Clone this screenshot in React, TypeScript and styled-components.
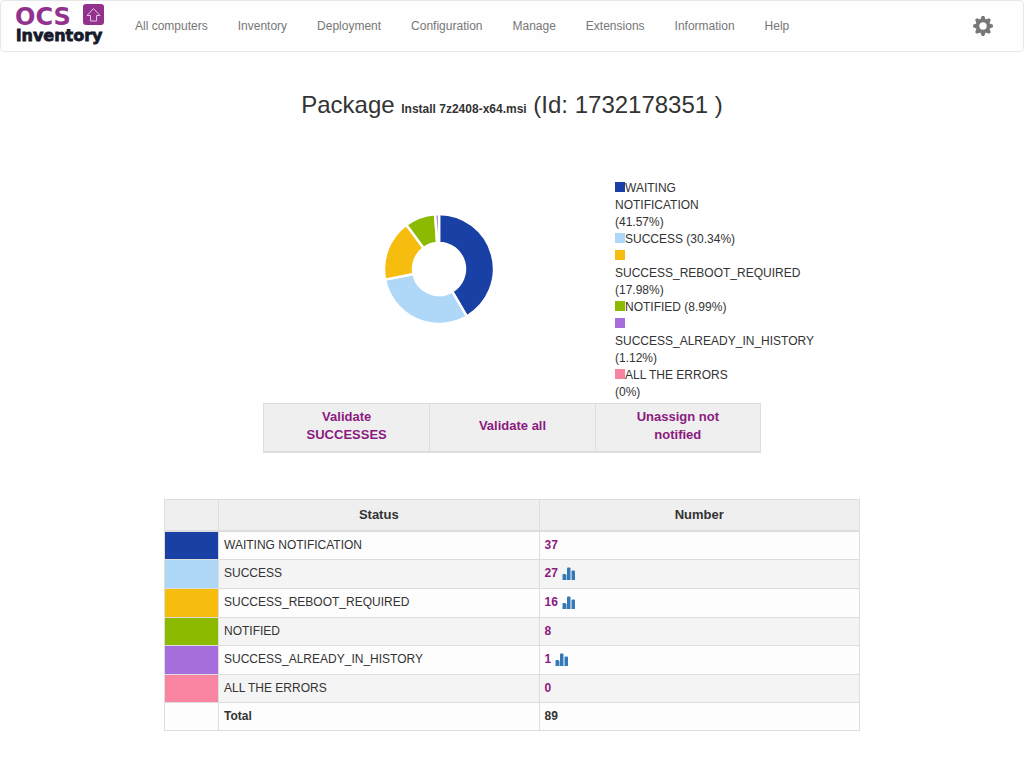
import React from 'react';
import styled, { createGlobalStyle } from 'styled-components';

const GlobalStyle = createGlobalStyle`
  * { box-sizing: border-box; }
  body {
    margin: 0;
    background: #fff;
    color: #333;
    font-family: "Liberation Sans", Arial, Helvetica, sans-serif;
    font-size: 12px;
    line-height: 17px;
  }
`;

const PURPLE = '#8b1a80';

const Navbar = styled.nav`
  display: flex;
  align-items: center;
  height: 52px;
  padding: 0 30px 0 15px;
  border: 1px solid #e7e7e7;
  border-radius: 4px;
  background: #fefefe;
`;

const Brand = styled.a`
  display: block;
  width: 90px;
  height: 44px;
  margin-right: 14px;
`;

const Menu = styled.ul`
  display: flex;
  flex: 1;
  margin: 0;
  padding: 0;
  list-style: none;
`;

const MenuLink = styled.a`
  display: block;
  padding: 15px;
  color: #777;
  text-decoration: none;
  white-space: nowrap;
`;

const GearButton = styled.button`
  display: flex;
  padding: 0;
  border: 0;
  background: none;
  cursor: pointer;
`;

const Main = styled.main`
  padding: 39px 164px 36px;
`;

const Title = styled.h3`
  margin: 0 0 57px;
  font-size: 24px;
  font-weight: 400;
  line-height: 28px;
  text-align: center;
`;

const PackageName = styled.b`
  font-size: 12px;
`;

const Summary = styled.section`
  width: 100%;
  max-width: 498px;
  margin: 0 auto 46px;
`;

const ChartRow = styled.div`
  display: flex;
  padding-bottom: 2px;
`;

const ChartArea = styled.div`
  flex: 1;
  display: flex;
  justify-content: center;
  padding-top: 34px;
`;

const Legend = styled.ul`
  width: 146px;
  margin: 0;
  padding: 0 16px 0 0;
  list-style: none;
`;

const Swatch = styled.span<{ $color: string }>`
  display: inline-block;
  width: 10px;
  height: 10px;
  background: ${(p) => p.$color};
`;

const Actions = styled.div`
  display: grid;
  grid-template-columns: repeat(3, 1fr);
  height: 50px;
  border: 1px solid #ddd;
  border-bottom-width: 2px;
  background: #efefef;
`;

const ActionButton = styled.button`
  padding: 0 40px 3px;
  border: 0;
  background: none;
  color: ${PURPLE};
  font: bold 13px/18px "Liberation Sans", Arial, sans-serif;
  cursor: pointer;
  & + & { border-left: 1px solid #ddd; }
`;

const StatusTable = styled.table`
  width: 100%;
  table-layout: fixed;
  border-collapse: collapse;
  tbody tr { background: #fdfdfd; }
  tbody tr:nth-child(even) { background: #f4f4f4; }
`;

const ColorCol = styled.col`
  width: 54px;
`;

const HeadCell = styled.th`
  height: 31px;
  padding: 5px;
  border: 1px solid #ddd;
  border-bottom-width: 2px;
  background: #efefef;
  font-size: 13px;
`;

const Cell = styled.td<{ $fill?: string; $strong?: boolean }>`
  padding: 5px;
  border: 1px solid #ddd;
  vertical-align: top;
  font-weight: ${(p) => (p.$strong ? 700 : 400)};
  background: ${(p) => p.$fill ?? 'transparent'};
  background-clip: padding-box;
`;

const CountLine = styled.div`
  display: flex;
  align-items: center;
  gap: 4px;
`;

const CountLink = styled.a`
  color: ${PURPLE};
  font-weight: 700;
  text-decoration: none;
`;

const StatsLink = styled.a`
  display: flex;
  align-items: center;
  height: 18px;
`;

type Status = { label: string; percent: string; count: number; color: string; stats?: boolean };

const statuses: Status[] = [
  { label: 'WAITING NOTIFICATION', percent: '41.57%', count: 37, color: '#1941a5' },
  { label: 'SUCCESS', percent: '30.34%', count: 27, color: '#afd8f8', stats: true },
  { label: 'SUCCESS_REBOOT_REQUIRED', percent: '17.98%', count: 16, color: '#f6bd0f', stats: true },
  { label: 'NOTIFIED', percent: '8.99%', count: 8, color: '#8bba00' },
  { label: 'SUCCESS_ALREADY_IN_HISTORY', percent: '1.12%', count: 1, color: '#a66edd', stats: true },
  { label: 'ALL THE ERRORS', percent: '0%', count: 0, color: '#f984a1' },
];

const total = statuses.reduce((sum, s) => sum + s.count, 0);

const menuItems = [
  'All computers', 'Inventory', 'Deployment', 'Configuration',
  'Manage', 'Extensions', 'Information', 'Help',
];

function Logo() {
  return (
    <svg width="90" height="44" viewBox="0 0 90 44" role="img" aria-label="OCS inventory">
      <text x="-1" y="21" fontFamily="DejaVu Sans" fontWeight="700" fontSize="24" fill="#93328e">OCS</text>
      <rect x="67" y="0" width="21" height="21" rx="3" fill="#93328e" />
      <path d="M77.500 4.500L84 11.500H80.500V17H74.500V11.500H71Z" fill="none" stroke="#e3c3e1" strokeWidth="1" strokeLinejoin="round" />
      <text x="0" y="37" fontFamily="DejaVu Sans" fontWeight="700" fontSize="16" fill="#171a2b" stroke="#171a2b" strokeWidth="0.8">inventory</text>
    </svg>
  );
}

function Gear() {
  const teeth = [0, 45, 90, 135, 180, 225, 270, 315];
  return (
    <svg width="20" height="20" viewBox="-10 -10 20 20" aria-hidden="true">
      <circle r="5.500" fill="none" stroke="#777" strokeWidth="3.600" />
      {teeth.map((a) => (
        <path key={a} d="M-2.600 -6.500L-1.200 -9.900H1.200L2.600 -6.500Z" fill="#777" transform={`rotate(${a})`} />
      ))}
    </svg>
  );
}

function Donut() {
  const outer = 55;
  const inner = 26;
  const point = (r: number, turn: number) => {
    const a = turn * 2 * Math.PI;
    return `${r * Math.sin(a)} ${-r * Math.cos(a)}`;
  };
  let start = 0;
  return (
    <svg width="110" height="110" viewBox="-55 -55 110 110" role="img" aria-label="Deployment status">
      {statuses.filter((s) => s.count > 0).map((s) => {
        const from = start;
        const to = start + s.count / total;
        start = to;
        const large = to - from > 0.5 ? 1 : 0;
        const d = `M${point(outer, from)}A${outer} ${outer} 0 ${large} 1 ${point(outer, to)}L${point(inner, to)}A${inner} ${inner} 0 ${large} 0 ${point(inner, from)}Z`;
        return <path key={s.label} d={d} fill={s.color} stroke="#fff" strokeWidth="2.500" />;
      })}
    </svg>
  );
}

function BarsIcon() {
  return (
    <svg width="14" height="14" viewBox="0 0 14 14" aria-hidden="true">
      <rect x="0" y="1" width="13" height="12" fill="none" />
      <path d="M0.500 13V8Q0.500 7 1.500 7H3Q4 7 4 8V13Z" fill="#3478b5" />
      <path d="M5 13V1.500Q5 0.500 6 0.500H7.500Q8.500 0.500 8.500 1.500V13Z" fill="#3478b5" />
      <path d="M9.500 13V4.500Q9.500 3.500 10.500 3.500H12Q13 3.500 13 4.500V13Z" fill="#3478b5" />
      <path d="M4 8H5V13H4ZM8.500 4.500H9.500V13H8.500Z" fill="#9dbfdd" />
    </svg>
  );
}

export default function App() {
  return (
    <>
      <GlobalStyle />
      <Navbar>
        <Brand href="#"><Logo /></Brand>
        <Menu>
          {menuItems.map((item) => (
            <li key={item}><MenuLink href="#">{item}</MenuLink></li>
          ))}
        </Menu>
        <GearButton aria-label="Settings"><Gear /></GearButton>
      </Navbar>
      <Main>
        <Title>Package <PackageName>Install 7z2408-x64.msi</PackageName> (Id: 1732178351 )</Title>
        <Summary>
          <ChartRow>
            <ChartArea><Donut /></ChartArea>
            <Legend>
              {statuses.map((s) => (
                <li key={s.label}><Swatch $color={s.color} />{s.label} ({s.percent})</li>
              ))}
            </Legend>
          </ChartRow>
          <Actions>
            <ActionButton>Validate SUCCESSES</ActionButton>
            <ActionButton>Validate all</ActionButton>
            <ActionButton>Unassign not notified</ActionButton>
          </Actions>
        </Summary>
        <StatusTable>
          <colgroup><ColorCol /><col /><col /></colgroup>
          <thead>
            <tr><HeadCell /><HeadCell>Status</HeadCell><HeadCell>Number</HeadCell></tr>
          </thead>
          <tbody>
            {statuses.map((s) => (
              <tr key={s.label}>
                <Cell $fill={s.color} />
                <Cell>{s.label}</Cell>
                <Cell>
                  <CountLine>
                    <CountLink href="#">{s.count}</CountLink>
                    {s.stats && <StatsLink href="#" aria-label={`${s.label} statistics`}><BarsIcon /></StatsLink>}
                  </CountLine>
                </Cell>
              </tr>
            ))}
            <tr>
              <Cell />
              <Cell $strong>Total</Cell>
              <Cell $strong>{total}</Cell>
            </tr>
          </tbody>
        </StatusTable>
      </Main>
    </>
  );
}
